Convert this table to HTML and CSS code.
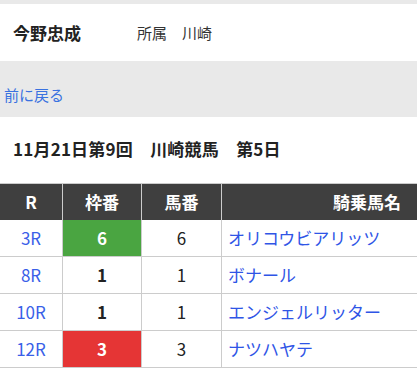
FILE: index.html
```html
<!DOCTYPE html>
<html lang="ja">
<head>
<meta charset="utf-8">
<link rel="stylesheet" href="styles.css">
</head>
<body>
<div class="gap"></div>
<div class="profile">
  <span class="name">今野忠成</span>
  <span class="aff">所属　川崎</span>
</div>
<div class="back"><a href="#">前に戻る</a></div>
<div class="title">11月21日第9回　川崎競馬　第5日</div>
<table class="races">
  <thead>
    <tr><th class="c-r">R</th><th class="c-w">枠番</th><th class="c-u">馬番</th><th class="c-n">騎乗馬名</th></tr>
  </thead>
  <tbody>
    <tr><td class="r"><a href="#">3R</a></td><td class="waku w6">6</td><td>6</td><td class="n"><a href="#">オリコウビアリッツ</a></td></tr>
    <tr><td class="r"><a href="#">8R</a></td><td class="waku">1</td><td>1</td><td class="n"><a href="#">ボナール</a></td></tr>
    <tr><td class="r"><a href="#">10R</a></td><td class="waku">1</td><td>1</td><td class="n"><a href="#">エンジェルリッター</a></td></tr>
    <tr><td class="r"><a href="#">12R</a></td><td class="waku w3">3</td><td>3</td><td class="n"><a href="#">ナツハヤテ</a></td></tr>
  </tbody>
</table>
</body>
</html>
```
FILE: styles.css
```css
html, body {
  margin: 0;
  padding: 0;
  background: #fff;
  font-family: "Noto Sans CJK JP", "Noto Sans", sans-serif;
  color: #222;
}
a { text-decoration: none; }
.gap { height: 4px; background: #e9e9e9; }
.profile {
  height: 57px;
  display: flex;
  align-items: center;
  padding-left: 13px;
}
.name {
  font-size: 17px;
  font-weight: bold;
  width: 124px;
  line-height: 22px;
}
.aff { font-size: 15px; line-height: 22px; color: #333; }
.back {
  height: 56px;
  box-sizing: border-box;
  background: #e9e9e9;
  padding: 23px 0 0 4px;
  font-size: 15px;
  line-height: 22px;
}
.back a { color: #3a72e0; }
.title {
  height: 66px;
  box-sizing: border-box;
  display: flex;
  align-items: center;
  padding: 0 0 2px 13px;
  font-size: 17px;
  font-weight: bold;
  line-height: 22px;
  letter-spacing: 0.2px;
}
.races {
  width: 100%;
  border-collapse: collapse;
  border-top: 1px solid #ccc;
  font-size: 17px;
  line-height: 22px;
}
.races th {
  background: #3f3f3f;
  color: #fff;
  height: 36px;
  padding: 0;
  font-weight: bold;
  border-left: 1px solid #ccc;
  border-right: 1px solid #ccc;
}
.races th:first-child, .races td:first-child { border-left: none; }
.races th:last-child, .races td:last-child { border-right: none; }
.c-r { width: 62px; }
.c-w { width: 78px; }
.c-u { width: 79px; }
.races th.c-n { text-align: right; padding-right: 16px; }
.races td {
  height: 36px;
  padding: 0;
  text-align: center;
  border: 1px solid #ccc;
  border-top: none;
}
.races td.r a { color: #3a5fe8; }
.races td.waku { font-weight: bold; }
.races td.w6 { background: #4aa541; color: #fff; }
.races td.w3 { background: #e53535; color: #fff; }
.races td.n { text-align: left; padding-left: 6px; }
.races td.n a { color: #2f55e6; }
```
